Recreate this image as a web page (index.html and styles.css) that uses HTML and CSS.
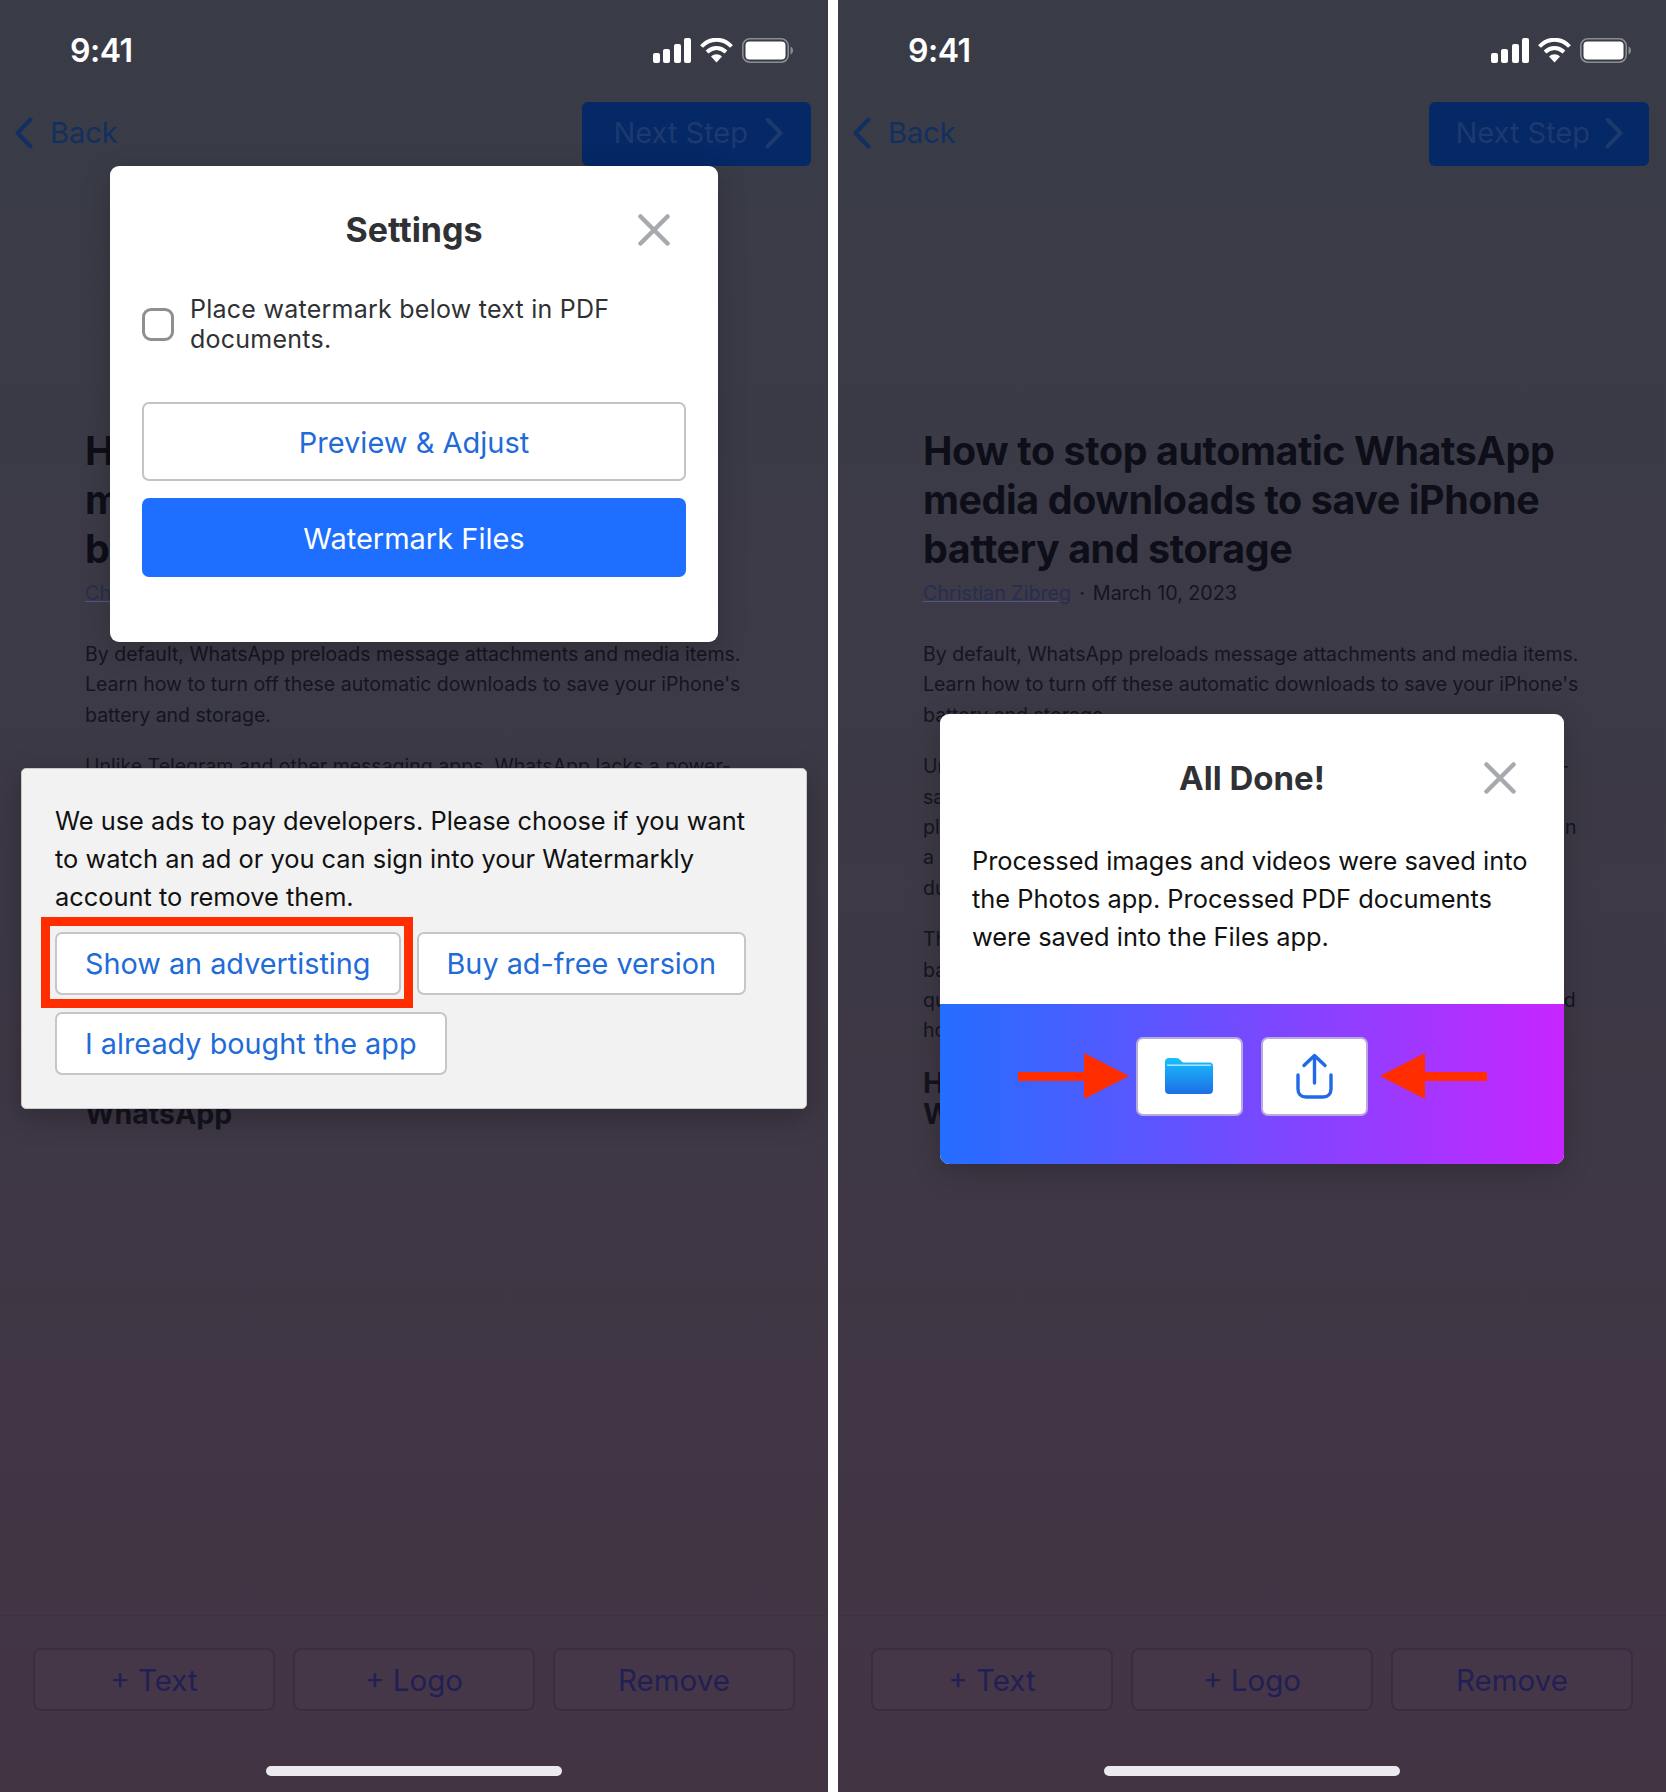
FILE: index.html
```html
<!DOCTYPE html>
<html lang="en">
<head>
    <meta charset="UTF-8">
    <meta name="viewport" content="width=device-width, initial-scale=1.0">
    <title>Watermarkly steps</title>
    <link rel="stylesheet" href="styles.css">
</head>
<body>

<svg class="sprite" width="0" height="0">
    <symbol id="signal" viewBox="0 0 38 25">
        <rect x="0" y="15" width="7" height="10" rx="2"/>
        <rect x="10" y="11" width="7" height="14" rx="2"/>
        <rect x="21" y="6" width="7" height="19" rx="2"/>
        <rect x="31" y="0" width="7" height="25" rx="2"/>
    </symbol>
    <symbol id="wifi" viewBox="0 0 33 25">
        <path d="M1.500 8.500C10 -0.500 23 -0.500 31.500 8.500" fill="none" stroke="#fff" stroke-width="4"/>
        <path d="M7 14C13 8.800 20 8.800 26 14" fill="none" stroke="#fff" stroke-width="4"/>
        <path d="M11 18.500C14.500 15.600 18.500 15.600 22 18.500L16.500 24.500Z" fill="#fff"/>
    </symbol>
    <symbol id="battery" viewBox="0 0 51 25">
        <rect x="0.800" y="0.800" width="45.400" height="23.400" rx="7" fill="none" stroke="#8b8d94" stroke-width="1.600"/>
        <rect x="3.500" y="3.500" width="40" height="18" rx="4" fill="#fff"/>
        <path d="M48.500 8.500C50.300 9.300 51 10.800 51 12.500C51 14.200 50.300 15.700 48.500 16.500Z" fill="#8b8d94"/>
    </symbol>
    <symbol id="chev-left" viewBox="0 0 18 32">
        <path d="M15.500 2.500L2.500 16L15.500 29.500" fill="none" stroke="currentColor" stroke-width="4" stroke-linecap="round" stroke-linejoin="round"/>
    </symbol>
    <symbol id="chev-right" viewBox="0 0 18 32">
        <path d="M2.500 2.500L15.500 16L2.500 29.500" fill="none" stroke="currentColor" stroke-width="4" stroke-linecap="round" stroke-linejoin="round"/>
    </symbol>
    <symbol id="close" viewBox="0 0 32 32">
        <path d="M2.500 2.500L29.500 29.500M29.500 2.500L2.500 29.500" fill="none" stroke="#a6a9ae" stroke-width="4.500" stroke-linecap="round"/>
    </symbol>
</svg>

<!-- Left phone: settings + ad prompt -->
<section class="phone">
    <div class="status-bar">
        <span class="time">9:41</span>
        <div class="status-icons">
            <svg class="icon-signal"><use href="#signal"/></svg>
            <svg class="icon-wifi"><use href="#wifi"/></svg>
            <svg class="icon-battery"><use href="#battery"/></svg>
        </div>
    </div>
    <nav class="nav-bar">
        <a class="back-link"><svg class="chev"><use href="#chev-left"/></svg>Back</a>
        <a class="next-btn next-wide">Next Step<svg class="chev"><use href="#chev-right"/></svg></a>
    </nav>
    <article class="article">
        <h2 class="article-title">How to stop automatic WhatsApp<br>media downloads to save iPhone<br>battery and storage</h2>
        <div class="article-meta"><a class="author">Christian Zibreg</a><span class="dot">·</span><span>March 10, 2023</span></div>
        <p>By default, WhatsApp preloads message attachments and media items.<br>Learn how to turn off these automatic downloads to save your iPhone's<br>battery and storage.</p>
        <p>Unlike Telegram and other messaging apps, WhatsApp lacks a power-<br>saving mode for media, so every photo and video keeps arriving in<br>place on your phone and fills it up over the day, draining your iPhone in<br>a short time, and it will also eat into the mobile data you have<br>during the month.</p>
        <p class="para-tight">The good news is that you can save your iPhone's storage and<br>battery by choosing what gets saved. Turning this off takes only a<br>quick visit to the setting and it's the same whatever phone you use and<br>however much you use the app.</p>
        <h3 class="article-sub">How to stop all files from automatic saving in<br>WhatsApp</h3>
    </article>
    <div class="toolbar">
        <button class="tool-btn">+ Text</button>
        <button class="tool-btn">+ Logo</button>
        <button class="tool-btn">Remove</button>
    </div>
    <div class="home-bar"></div>

    <div class="modal settings-modal">
        <div class="modal-head">
            <span></span>
            <h3>Settings</h3>
            <svg class="close-icon"><use href="#close"/></svg>
        </div>
        <label class="check-row">
            <span class="checkbox"></span>
            <span>Place watermark below text in PDF documents.</span>
        </label>
        <button class="wide-btn outline">Preview &amp; Adjust</button>
        <button class="wide-btn solid">Watermark Files</button>
    </div>

    <div class="ad-dialog">
        <p>We use ads to pay developers. Please choose if you want<br>to watch an ad or you can sign into your Watermarkly<br>account to remove them.</p>
        <div class="ad-actions">
            <div class="highlighted">
                <button class="ad-btn">Show an advertisting</button>
                <span class="red-box"></span>
            </div>
            <button class="ad-btn">Buy ad-free version</button>
            <button class="ad-btn">I already bought the app</button>
        </div>
    </div>
</section>

<!-- Right phone: all done -->
<section class="phone">
    <div class="status-bar">
        <span class="time">9:41</span>
        <div class="status-icons">
            <svg class="icon-signal"><use href="#signal"/></svg>
            <svg class="icon-wifi"><use href="#wifi"/></svg>
            <svg class="icon-battery"><use href="#battery"/></svg>
        </div>
    </div>
    <nav class="nav-bar">
        <a class="back-link"><svg class="chev"><use href="#chev-left"/></svg>Back</a>
        <a class="next-btn">Next Step<svg class="chev"><use href="#chev-right"/></svg></a>
    </nav>
    <article class="article">
        <h2 class="article-title">How to stop automatic WhatsApp<br>media downloads to save iPhone<br>battery and storage</h2>
        <div class="article-meta"><a class="author">Christian Zibreg</a><span class="dot">·</span><span>March 10, 2023</span></div>
        <p>By default, WhatsApp preloads message attachments and media items.<br>Learn how to turn off these automatic downloads to save your iPhone's<br>battery and storage.</p>
        <p>Unlike Telegram and other messaging apps, WhatsApp lacks a power-<br>saving mode for media, so every photo and video keeps arriving in<br>place on your phone and fills it up over the day, draining your iPhone in<br>a short time, and it will also eat into the mobile data you have<br>during the month.</p>
        <p class="para-tight">The good news is that you can save your iPhone's storage and<br>battery by choosing what gets saved. Turning this off takes only a<br>quick visit to the setting and it's the same whatever phone you use and<br>however much you use the app.</p>
        <h3 class="article-sub">How to stop all files from automatic saving in<br>WhatsApp</h3>
    </article>
    <div class="toolbar">
        <button class="tool-btn">+ Text</button>
        <button class="tool-btn">+ Logo</button>
        <button class="tool-btn">Remove</button>
    </div>
    <div class="home-bar"></div>

    <div class="modal done-modal">
        <div class="modal-head">
            <span></span>
            <h3 class="done-title">All Done!</h3>
            <svg class="close-icon"><use href="#close"/></svg>
        </div>
        <p class="done-text">Processed images and videos were saved into<br>the Photos app. Processed PDF documents<br>were saved into the Files app.</p>
        <div class="done-strip">
            <svg class="arrow arrow-in" viewBox="0 0 111 46">
                <polygon points="0,19 66,19 66,0 111,23 66,46 66,28 0,28"/>
            </svg>
            <div class="app-tile">
                <svg class="folder" viewBox="0 0 48 36">
                    <defs>
                        <linearGradient id="folderFill" x1="0" y1="0" x2="0" y2="1">
                            <stop offset="0" stop-color="#19c0fb"/>
                            <stop offset="1" stop-color="#1d6ee6"/>
                        </linearGradient>
                    </defs>
                    <path d="M0 4C0 1.500 1.500 0 4 0H11C13 0 14 .8 15.500 2.200L18 4.500H44.500C46.800 4.500 48 5.800 48 8V32C48 34.500 46.500 36 44 36H4C1.500 36 0 34.500 0 32Z" fill="url(#folderFill)"/>
                    <rect x="2" y="6.500" width="44" height="1.300" fill="#bdeeff"/>
                </svg>
            </div>
            <div class="app-tile">
                <svg class="share" viewBox="0 0 37 46">
                    <path d="M18.500 30V3M8 12.500L18.500 2.500L29 12.500" fill="none" stroke="#2169e8" stroke-width="3.400" stroke-linecap="round" stroke-linejoin="round"/>
                    <path d="M2 22V36C2 41 5 44 10 44H27C32 44 35 41 35 36V22" fill="none" stroke="#2169e8" stroke-width="3.400" stroke-linecap="round"/>
                </svg>
            </div>
            <svg class="arrow arrow-out" viewBox="0 0 107 46">
                <polygon points="107,19 45,19 45,0 0,23 45,46 45,28 107,28"/>
            </svg>
        </div>
    </div>
</section>

</body>
</html>
```

FILE: styles.css
```css
/* Page */
body {
    margin: 0;
    display: flex;
    gap: 10px;
    background: #ffffff;
    font-family: Inter, "Liberation Sans", sans-serif;
}

button {
    font-family: inherit;
}

.sprite {
    position: absolute;
}

/* Phone screen, dimmed */
.phone {
    position: relative;
    width: 828px;
    height: 1792px;
    display: flex;
    flex-direction: column;
    overflow: hidden;
    background: linear-gradient(180deg, #393c47 0%, #3c3a46 40%, #433444 100%);
}

/* Status bar */
.status-bar {
    height: 100px;
    display: flex;
    justify-content: space-between;
    align-items: center;
    padding: 0 35px 0 70px;
    box-sizing: border-box;
}

.time {
    font-size: 32px;
    font-weight: 600;
    color: #ffffff;
    letter-spacing: -0.5px;
}

.status-icons {
    display: flex;
    align-items: center;
    gap: 9px;
}

.icon-signal {
    width: 38px;
    height: 25px;
    fill: #ffffff;
}

.icon-wifi {
    width: 33px;
    height: 25px;
}

.icon-battery {
    width: 51px;
    height: 25px;
}

/* Navigation */
.nav-bar {
    height: 82px;
    display: flex;
    justify-content: space-between;
    padding: 2px 17px 0 15px;
    box-sizing: border-box;
    border-bottom: 1px solid #383a45;
    font-size: 29px;
    line-height: 62px;
}

.chev {
    width: 18px;
    height: 32px;
}

.back-link {
    height: 64px;
    box-sizing: border-box;
    padding-bottom: 2px;
    display: flex;
    align-items: center;
    gap: 17px;
    color: #12305f;
    font-size: 29px;
}

.next-btn {
    height: 64px;
    box-sizing: border-box;
    padding: 0 26px 2px;
    display: flex;
    align-items: center;
    gap: 15px;
    background: #052866;
    border-radius: 6px;
    color: #1c3a6e;
}

.next-wide {
    padding: 0 28px 2px 31px;
    gap: 17px;
}

/* Article behind the overlay */
.article {
    flex: 1;
    padding: 245px 0 0 85px;
    color: #14151e;
    white-space: nowrap;
}

.article-title {
    margin: 0;
    font-size: 39.400px;
    font-weight: 700;
    line-height: 49px;
    letter-spacing: -0.4px;
    color: #0d0e17;
}

.article-meta {
    margin-top: 4px;
    font-size: 19.700px;
    line-height: 30px;
}

.author {
    color: #292d50;
    text-decoration: underline;
    text-decoration-color: #50558a;
}

.dot {
    margin: 0 8px;
}

.article p {
    margin: 0 0 21px;
    font-size: 19.500px;
    line-height: 30.400px;
}

.article-meta + p {
    margin-top: 31px;
}

.article .para-tight {
    margin-bottom: 21px;
}

.article-sub {
    margin: 0;
    font-size: 28.500px;
    font-weight: 700;
    line-height: 31px;
    color: #14131d;
}

/* Bottom toolbar */
.toolbar {
    display: grid;
    grid-template-columns: repeat(3, 1fr);
    gap: 18px;
    height: 177px;
    padding: 32px 33px 0;
    box-sizing: border-box;
    border-top: 1px solid #3f3141;
}

.tool-btn {
    height: 63px;
    background: #453748;
    border: 2px solid #3b2d40;
    border-radius: 8px;
    font-size: 29.500px;
    color: #221f54;
}

.home-bar {
    position: absolute;
    left: 266px;
    bottom: 16px;
    width: 296px;
    height: 10px;
    background: #ece9ef;
    border-radius: 5px;
}

/* White modals */
.modal {
    position: absolute;
    box-sizing: border-box;
    background: #ffffff;
    border-radius: 9px;
    box-shadow: 0 8px 30px rgba(0, 0, 0, 0.2);
    overflow: hidden;
}

.settings-modal {
    left: 110px;
    top: 166px;
    width: 608px;
    height: 476px;
    padding: 48px 32px 0;
}

.done-modal {
    left: 102px;
    top: 714px;
    width: 624px;
    height: 450px;
    padding-top: 48px;
}

.modal-head {
    display: grid;
    grid-template-columns: 1fr auto 1fr;
    align-items: center;
    height: 32px;
}

.modal-head h3 {
    margin: 0;
    font-size: 34px;
    font-weight: 700;
    line-height: 32px;
    color: #2f3135;
}

.modal-head .done-title {
    font-size: 33px;
}

.close-icon {
    width: 32px;
    height: 32px;
    justify-self: end;
    margin-right: 16px;
}

.done-modal .close-icon {
    margin-right: 48px;
}

.check-row {
    display: flex;
    align-items: center;
    gap: 16px;
    margin-top: 48px;
    font-size: 25px;
    line-height: 30px;
    letter-spacing: 0.25px;
    color: #2f3135;
}

.checkbox {
    flex: none;
    width: 32px;
    height: 33px;
    box-sizing: border-box;
    border: 3px solid #8f8f8f;
    border-radius: 9px;
}

.wide-btn {
    display: block;
    width: 100%;
    height: 79px;
    padding-top: 2px;
    border-radius: 7px;
    font-size: 29px;
}

.outline {
    margin-top: 48px;
    background: #ffffff;
    border: 2px solid #c4c4c4;
    color: #1f6bd8;
}

.solid {
    margin-top: 17px;
    background: #1e6fff;
    border: 0;
    color: #ffffff;
}

/* Ad prompt */
.ad-dialog {
    position: absolute;
    left: 21px;
    top: 768px;
    width: 786px;
    box-sizing: border-box;
    padding: 33px 33px 33px;
    background: #f2f2f2;
    border: 1px solid #c9c9c9;
    border-radius: 5px;
    box-shadow: 0 8px 30px rgba(0, 0, 0, 0.25);
}

.ad-dialog p {
    margin: 0;
    font-size: 25.400px;
    line-height: 38px;
    color: #111111;
}

.ad-actions {
    display: flex;
    flex-wrap: wrap;
    gap: 17px 16px;
    margin-top: 16px;
}

.highlighted {
    position: relative;
    display: flex;
}

.ad-btn {
    height: 63px;
    padding: 0 28px;
    background: #ffffff;
    border: 2px solid #c6c6c6;
    border-radius: 7px;
    font-size: 28.800px;
    color: #1f6bd8;
}

.red-box {
    position: absolute;
    top: -15px;
    right: -12px;
    bottom: -13px;
    left: -14px;
    border: 9px solid #ff2d00;
}

/* All done modal */
.done-text {
    margin: 48px 0 48px 32px;
    font-size: 25.400px;
    line-height: 38px;
    color: #111111;
}

.done-strip {
    height: 160px;
    display: flex;
    justify-content: center;
    align-items: center;
    padding-bottom: 16px;
    box-sizing: border-box;
    background: linear-gradient(90deg, #246eff, #c825ff);
}

.app-tile {
    width: 107px;
    height: 79px;
    display: flex;
    justify-content: center;
    align-items: center;
    box-sizing: border-box;
    background: #ffffff;
    border: 2px solid #b9a9dc;
    border-radius: 7px;
}

.app-tile + .app-tile {
    margin-left: 18px;
}

.folder {
    width: 48px;
    height: 36px;
}

.share {
    width: 37px;
    height: 46px;
}

.arrow {
    width: 111px;
    height: 46px;
    fill: #ff2d00;
}

.arrow-in {
    margin-right: 7px;
}

.arrow-out {
    width: 107px;
    margin-left: 12px;
}
```
